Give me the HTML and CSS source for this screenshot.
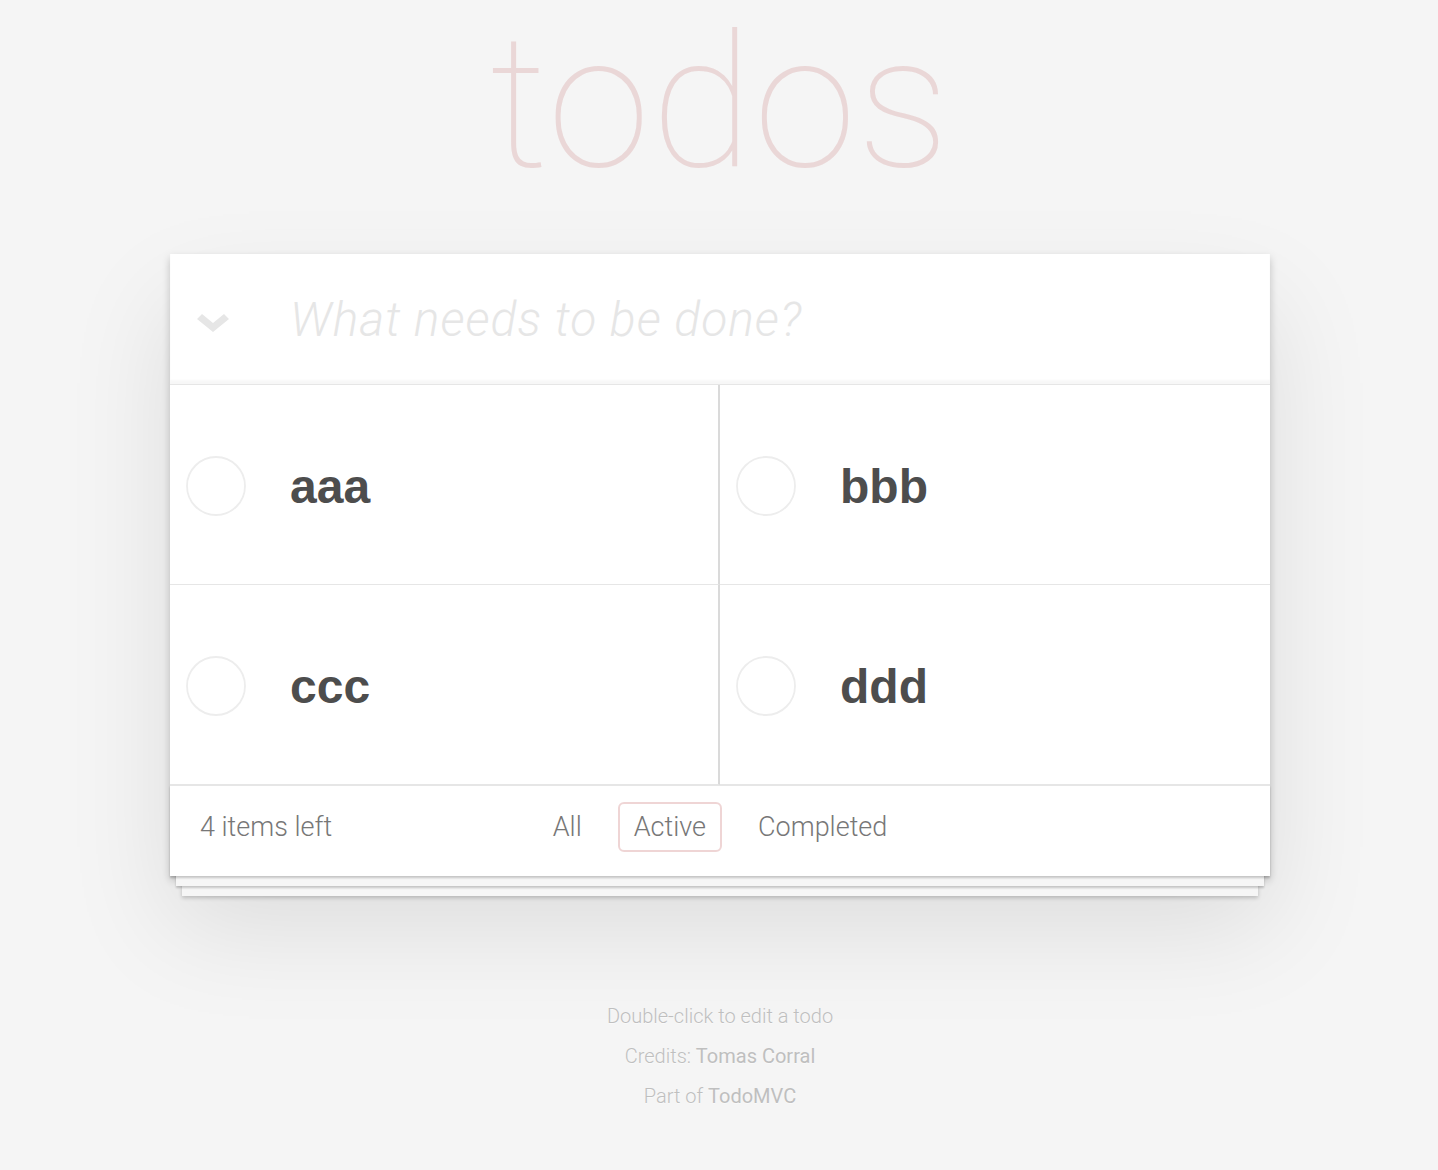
FILE: index.html
```html
<!DOCTYPE html>
<html lang="en">
<head>
<meta charset="utf-8">
<title>todos</title>
<link rel="stylesheet" href="styles.css">
</head>
<body>
<div class="page">
  <h1 class="title">todos</h1>
  <section class="todoapp">
    <div class="entry">
      <span class="toggle-all">
        <svg width="32" height="20" viewBox="0 0 32 20"><polygon points="0,6 5,1 16,10 27,1 32,6 16,19" fill="#e6e6e6"/></svg>
      </span>
      <input class="new-todo" type="text" placeholder="What needs to be done?">
    </div>
    <ul class="todo-list">
      <li class="todo">
        <svg class="check" width="60" height="60" viewBox="0 0 60 60"><circle cx="30" cy="30" r="29" fill="none" stroke="#ededed" stroke-width="1.8"/></svg>
        <span class="label">aaa</span>
      </li>
      <li class="todo">
        <svg class="check" width="60" height="60" viewBox="0 0 60 60"><circle cx="30" cy="30" r="29" fill="none" stroke="#ededed" stroke-width="1.8"/></svg>
        <span class="label">bbb</span>
      </li>
      <li class="todo">
        <svg class="check" width="60" height="60" viewBox="0 0 60 60"><circle cx="30" cy="30" r="29" fill="none" stroke="#ededed" stroke-width="1.8"/></svg>
        <span class="label">ccc</span>
      </li>
      <li class="todo">
        <svg class="check" width="60" height="60" viewBox="0 0 60 60"><circle cx="30" cy="30" r="29" fill="none" stroke="#ededed" stroke-width="1.8"/></svg>
        <span class="label">ddd</span>
      </li>
    </ul>
    <footer class="footer">
      <span class="count">4 items left</span>
      <ul class="filters">
        <li><a href="#/">All</a></li>
        <li><a class="selected" href="#/active">Active</a></li>
        <li><a href="#/completed">Completed</a></li>
      </ul>
      <span class="spacer"></span>
    </footer>
  </section>
  <footer class="info">
    <p>Double-click to edit a todo</p>
    <p>Credits: <a href="#">Tomas Corral</a></p>
    <p>Part of <a href="#">TodoMVC</a></p>
  </footer>
</div>
</body>
</html>
```

FILE: styles.css
```css
html, body {
  margin: 0;
}

body {
  padding: 0 0 0 2px;
  background: #f5f5f5;
  font-family: Roboto, "Liberation Sans", Arial, sans-serif;
  font-weight: 300;
  color: #4d4d4d;
}

.page {
  width: 1100px;
  margin: 0 auto;
}

.title {
  margin: 0;
  height: 204px;
  font-size: 186px;
  line-height: 204px;
  font-weight: 100;
  letter-spacing: 1px;
  text-align: center;
  color: rgba(175, 47, 47, 0.15);
}

.todoapp {
  margin-top: 50px;
  background: #fff;
  box-shadow: 0 4px 8px 0 rgba(0, 0, 0, 0.2), 0 50px 100px 0 rgba(0, 0, 0, 0.1);
}

.entry {
  display: flex;
  align-items: center;
  height: 130px;
  box-shadow: inset 0 -4px 2px rgba(0, 0, 0, 0.03);
}

.toggle-all {
  display: block;
  width: 32px;
  height: 20px;
  margin-left: 27px;
  margin-top: 7px;
  flex: none;
}

.toggle-all svg {
  display: block;
}

.new-todo {
  flex: 1;
  min-width: 0;
  margin: 0 0 0 61px;
  padding: 0;
  height: 68px;
  border: 0;
  outline: 0;
  background: transparent;
  font-family: Roboto, "Liberation Sans", Arial, sans-serif;
  font-size: 48px;
  font-weight: 300;
  letter-spacing: 1px;
  color: #4d4d4d;
}

.new-todo::placeholder {
  color: #e6e6e6;
  font-style: italic;
  font-weight: 300;
}

.todo-list {
  list-style: none;
  margin: 0;
  padding: 0;
  display: grid;
  grid-template-columns: 550px 550px;
  border-top: 1px solid #e6e6e6;
}

.todo {
  box-sizing: border-box;
  height: 200px;
  display: flex;
  align-items: center;
  padding-left: 16px;
  border-bottom: 1px solid #e6e6e6;
}

.todo:nth-child(odd) {
  border-right: 2px solid #dadada;
}

.check {
  display: block;
  flex: none;
  margin-top: 3px;
}

.label {
  margin-left: 44px;
  margin-top: 4px;
  font-family: "Liberation Sans", Arial, sans-serif;
  font-weight: 700;
  font-size: 48px;
  line-height: 1.2;
  color: #4d4d4d;
}

.todo:nth-child(even) .label {
  margin-left: 44px;
}

.footer {
  display: grid;
  grid-template-columns: 1fr auto 1fr;
  align-items: center;
  padding: 16px 30px 24px;
  border-top: 1px solid #e6e6e6;
  color: #777;
  font-size: 27px;
  box-shadow: 0 2px 2px rgba(0, 0, 0, 0.2),
    0 16px 0 -6px #f6f6f6,
    0 18px 2px -6px rgba(0, 0, 0, 0.2),
    0 32px 0 -12px #f6f6f6,
    0 34px 4px -12px rgba(0, 0, 0, 0.2);
}

.count {
  line-height: 34px;
}

.filters {
  list-style: none;
  margin: 0;
  padding: 0;
  display: flex;
  gap: 20px;
}

.filters a {
  display: block;
  padding: 6px 14px;
  border: 2px solid transparent;
  border-radius: 6px;
  line-height: 34px;
  color: inherit;
  text-decoration: none;
}

.filters a.selected {
  border-color: rgba(175, 47, 47, 0.2);
}

.info {
  margin-top: 130px;
  text-align: center;
  color: #bfbfbf;
  font-size: 20px;
  font-weight: 300;
  text-shadow: 0 1px 0 rgba(255, 255, 255, 0.5);
}

.info p {
  margin: 20px 0;
  line-height: 1;
}

.info a {
  color: inherit;
  font-weight: 400;
  text-decoration: none;
}
```
